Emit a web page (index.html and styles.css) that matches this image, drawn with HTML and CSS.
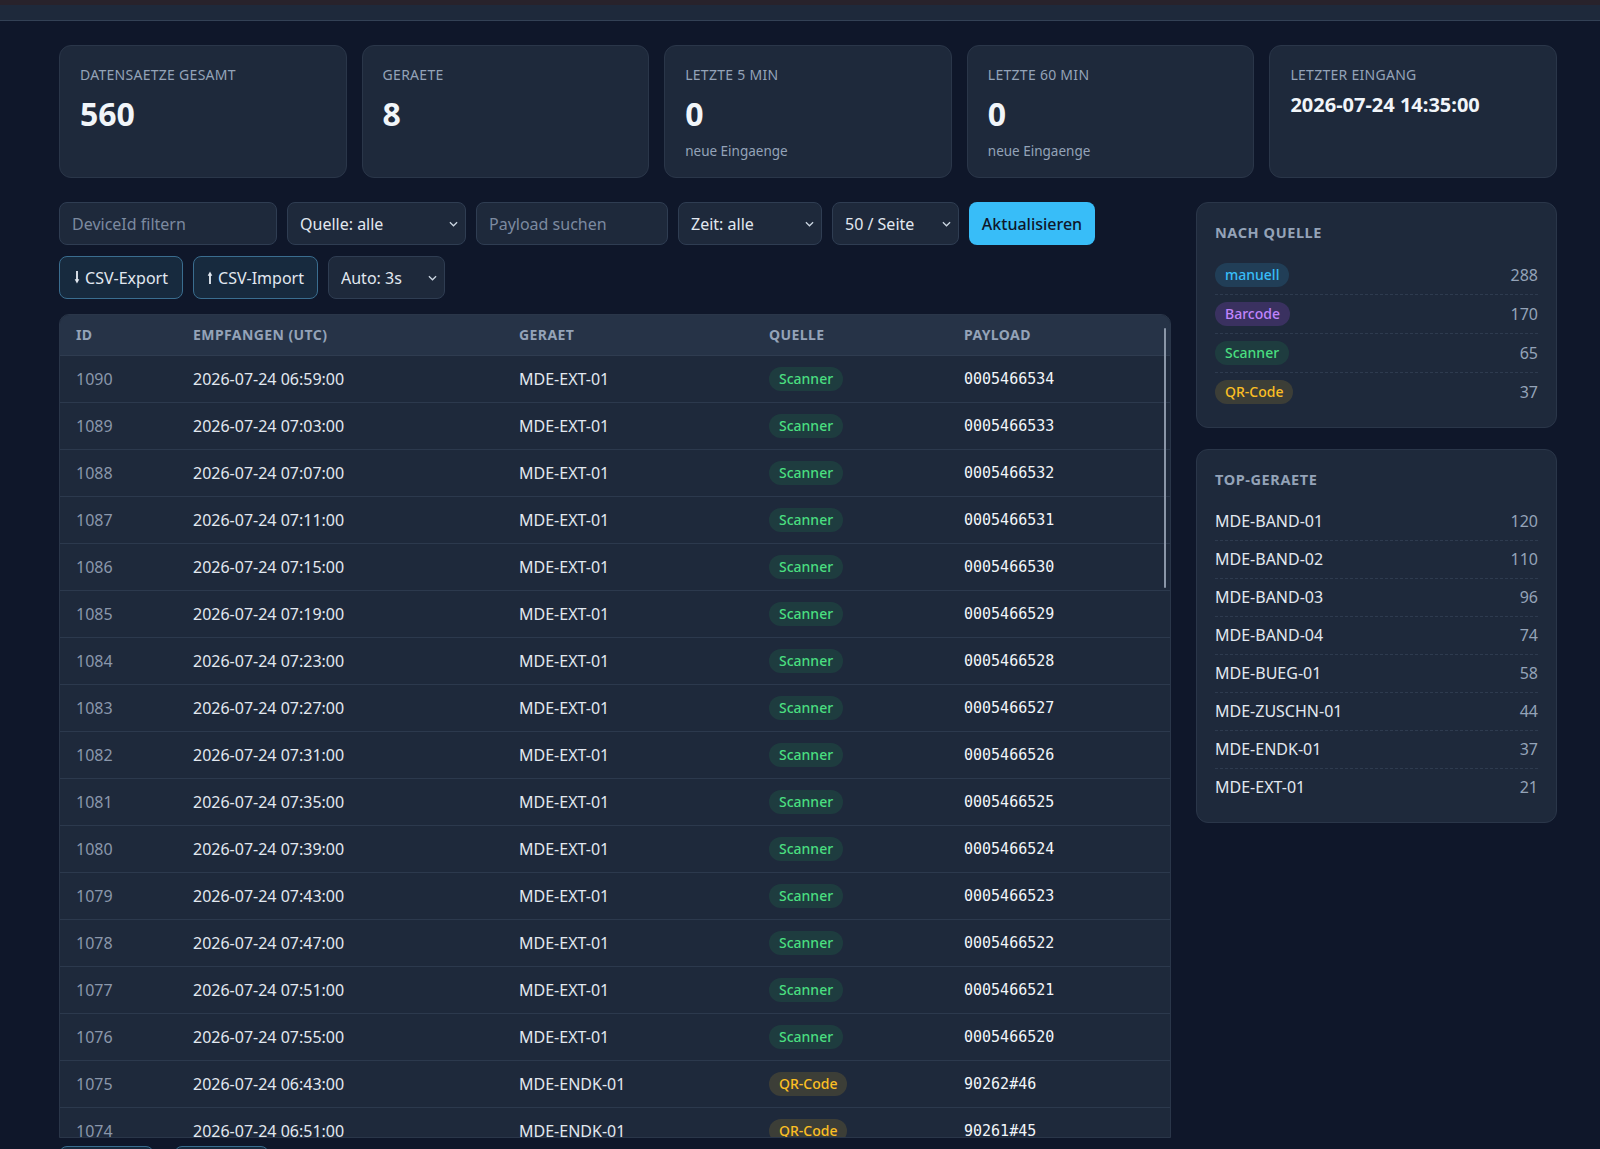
FILE: index.html
```html
<!DOCTYPE html>
<html lang="de">
<head>
    <meta charset="UTF-8">
    <meta name="viewport" content="width=device-width, initial-scale=1.0">
    <title>MDE Eingaenge</title>
    <link rel="stylesheet" href="styles.css">
</head>
<body>
    <div class="topbar"></div>

    <main class="page">
        <!-- Kennzahlen -->
        <section class="stats">
            <div class="stat-card">
                <div class="stat-label">Datensaetze gesamt</div>
                <div class="stat-value">560</div>
            </div>
            <div class="stat-card">
                <div class="stat-label">Geraete</div>
                <div class="stat-value">8</div>
            </div>
            <div class="stat-card">
                <div class="stat-label">Letzte 5 min</div>
                <div class="stat-value">0</div>
                <div class="stat-sub">neue Eingaenge</div>
            </div>
            <div class="stat-card">
                <div class="stat-label">Letzte 60 min</div>
                <div class="stat-value">0</div>
                <div class="stat-sub">neue Eingaenge</div>
            </div>
            <div class="stat-card">
                <div class="stat-label">Letzter Eingang</div>
                <div class="stat-value stat-value-small">2026-07-24 14:35:00</div>
            </div>
        </section>

        <div class="layout">
            <div class="main-col">
                <!-- Filter -->
                <div class="toolbar">
                    <input class="field w-device" type="text" placeholder="DeviceId filtern">
                    <label class="select-wrap w-source">
                        <select class="field">
                            <option>Quelle: alle</option>
                            <option>manuell</option>
                            <option>Barcode</option>
                            <option>Scanner</option>
                            <option>QR-Code</option>
                        </select>
                        <svg class="chevron" viewBox="0 0 10 6"><path d="M1 1l4 4 4-4"/></svg>
                    </label>
                    <input class="field w-payload" type="text" placeholder="Payload suchen">
                    <label class="select-wrap w-time">
                        <select class="field">
                            <option>Zeit: alle</option>
                            <option>5 min</option>
                            <option>60 min</option>
                        </select>
                        <svg class="chevron" viewBox="0 0 10 6"><path d="M1 1l4 4 4-4"/></svg>
                    </label>
                    <label class="select-wrap w-page">
                        <select class="field">
                            <option>50 / Seite</option>
                            <option>100 / Seite</option>
                        </select>
                        <svg class="chevron" viewBox="0 0 10 6"><path d="M1 1l4 4 4-4"/></svg>
                    </label>
                    <button class="btn btn-primary">Aktualisieren</button>
                </div>

                <div class="toolbar">
                    <button class="btn btn-outline w-export">
                        <svg class="arrow" viewBox="0 0 6 14"><path d="M3 0v10"/><path class="head" d="M0.5 9h5L3 13.5z"/></svg>
                        CSV-Export
                    </button>
                    <button class="btn btn-outline w-import">
                        <svg class="arrow" viewBox="0 0 6 14"><path d="M3 4v10"/><path class="head" d="M0.5 5h5L3 0.5z"/></svg>
                        CSV-Import
                    </button>
                    <label class="select-wrap w-auto">
                        <select class="field">
                            <option>Auto: 3s</option>
                            <option>Auto: 10s</option>
                            <option>Auto: aus</option>
                        </select>
                        <svg class="chevron" viewBox="0 0 10 6"><path d="M1 1l4 4 4-4"/></svg>
                    </label>
                </div>

                <!-- Tabelle -->
                <div class="table-wrap">
                    <table class="data-table">
                        <colgroup>
                            <col class="c-id">
                            <col class="c-time">
                            <col class="c-device">
                            <col class="c-source">
                            <col>
                        </colgroup>
                        <thead>
                            <tr>
                                <th>ID</th>
                                <th>Empfangen (UTC)</th>
                                <th>Geraet</th>
                                <th>Quelle</th>
                                <th>Payload</th>
                            </tr>
                        </thead>
                        <tbody id="rows"></tbody>
                    </table>
                </div>

                <div class="pager">
                    <button class="btn btn-outline"></button>
                    <button class="btn btn-outline"></button>
                </div>
            </div>

            <aside class="side-col">
                <div class="panel">
                    <h3 class="panel-title">Nach Quelle</h3>
                    <ul class="panel-list">
                        <li><span class="badge badge-manuell">manuell</span><span class="count">288</span></li>
                        <li><span class="badge badge-barcode">Barcode</span><span class="count">170</span></li>
                        <li><span class="badge badge-scanner">Scanner</span><span class="count">65</span></li>
                        <li><span class="badge badge-qr">QR-Code</span><span class="count">37</span></li>
                    </ul>
                </div>

                <div class="panel">
                    <h3 class="panel-title">Top-Geraete</h3>
                    <ul class="panel-list plain">
                        <li><span>MDE-BAND-01</span><span class="count">120</span></li>
                        <li><span>MDE-BAND-02</span><span class="count">110</span></li>
                        <li><span>MDE-BAND-03</span><span class="count">96</span></li>
                        <li><span>MDE-BAND-04</span><span class="count">74</span></li>
                        <li><span>MDE-BUEG-01</span><span class="count">58</span></li>
                        <li><span>MDE-ZUSCHN-01</span><span class="count">44</span></li>
                        <li><span>MDE-ENDK-01</span><span class="count">37</span></li>
                        <li><span>MDE-EXT-01</span><span class="count">21</span></li>
                    </ul>
                </div>
            </aside>
        </div>
    </main>

    <script>
        const badgeClass = {
            'Scanner': 'badge-scanner',
            'QR-Code': 'badge-qr',
            'Barcode': 'badge-barcode',
            'manuell': 'badge-manuell'
        };

        function fmtTime(minutes) {
            const h = String(Math.floor(minutes / 60)).padStart(2, '0');
            const m = String(minutes % 60).padStart(2, '0');
            return `2026-07-24 ${h}:${m}:00`;
        }

        const rows = [];

        // Scanner-Eingaenge vom Extruder
        for (let i = 0; i < 15; i++) {
            rows.push({
                id: 1090 - i,
                time: fmtTime(6 * 60 + 59 + i * 4),
                device: 'MDE-EXT-01',
                source: 'Scanner',
                payload: '000546' + (6534 - i)
            });
        }

        // QR-Codes aus der Endkontrolle
        for (let j = 0; j < 2; j++) {
            rows.push({
                id: 1075 - j,
                time: fmtTime(6 * 60 + 43 + j * 8),
                device: 'MDE-ENDK-01',
                source: 'QR-Code',
                payload: (90262 - j) + '#' + (46 - j)
            });
        }

        document.getElementById('rows').innerHTML = rows.map(r => `
            <tr>
                <td class="col-id">${r.id}</td>
                <td>${r.time}</td>
                <td>${r.device}</td>
                <td><span class="badge ${badgeClass[r.source]}">${r.source}</span></td>
                <td class="col-payload">${r.payload}</td>
            </tr>`).join('');
    </script>
</body>
</html>
```

FILE: styles.css
```css
* {
    margin: 0;
    padding: 0;
    box-sizing: border-box;
}

body {
    font-family: 'Noto Sans', 'Open Sans', sans-serif;
    background: #0f172a;
    color: #e2e8f0;
    overflow: hidden;
    height: 100vh;
}

.topbar {
    height: 21px;
    background: #1e293b;
    border-top: 5px solid #28222b;
    border-bottom: 1px solid #334155;
}

.page {
    padding: 24px 43px 0 59px;
}

/* Kennzahlen */
.stats {
    display: grid;
    grid-template-columns: repeat(5, 1fr);
    gap: 15px;
}

.stat-card {
    background: #1e293b;
    border: 1px solid #2a3649;
    border-radius: 12px;
    padding: 20px 20px 17px;
    height: 133px;
}

.stat-label {
    font-size: 14px;
    line-height: 18px;
    color: #94a3b8;
    text-transform: uppercase;
    letter-spacing: 0.02em;
}

.stat-value {
    margin-top: 8px;
    font-size: 32px;
    line-height: 44px;
    font-weight: 700;
    color: #f1f5f9;
}

.stat-value-small {
    font-size: 20px;
    line-height: 26px;
}

.stat-sub {
    margin-top: 6px;
    font-size: 13.5px;
    line-height: 18px;
    color: #94a3b8;
}

/* Hauptbereich */
.layout {
    display: grid;
    grid-template-columns: 1fr 361px;
    gap: 25px;
    margin-top: 24px;
    align-items: start;
}

.toolbar {
    display: flex;
    gap: 10px;
    margin-bottom: 11px;
}

.field {
    height: 43px;
    background: #1e293b;
    border: 1px solid #2f3d52;
    border-radius: 8px;
    color: #e2e8f0;
    font-family: inherit;
    font-size: 16px;
    padding: 0 12px;
    outline: none;
}

.field::placeholder {
    color: #7c8aa0;
}

select.field {
    appearance: none;
    width: 100%;
    cursor: pointer;
}

.select-wrap {
    position: relative;
    display: block;
}

.chevron {
    position: absolute;
    right: 8px;
    top: 19px;
    width: 9px;
    height: 6px;
    fill: none;
    stroke: #cbd5e1;
    stroke-width: 1.4;
    pointer-events: none;
}

.w-device { width: 218px; }
.w-source { width: 179px; }
.w-payload { width: 192px; }
.w-time { width: 144px; }
.w-page { width: 127px; }
.w-export { width: 124px; }
.w-import { width: 125px; }
.w-auto { width: 117px; }

.btn {
    height: 43px;
    border-radius: 8px;
    font-family: inherit;
    font-size: 16px;
    padding: 0 12px;
    cursor: pointer;
    display: inline-flex;
    align-items: center;
    justify-content: center;
    gap: 5px;
}

.btn-primary {
    width: 126px;
    background: #38bdf8;
    border: none;
    color: #0f172a;
    font-weight: 500;
}

.btn-outline {
    background: #172a3e;
    border: 1px solid #3a6d8f;
    color: #e2e8f0;
}

.arrow {
    width: 6px;
    height: 13px;
    stroke: #e2e8f0;
    stroke-width: 2;
    fill: none;
}

.arrow .head {
    fill: #e2e8f0;
    stroke: none;
}

/* Tabelle */
.table-wrap {
    position: relative;
    margin-top: 15px;
    height: 824px;
    overflow: hidden;
    background: #1e293b;
    border: 1px solid #2a3649;
    border-radius: 10px 10px 0 0;
}

/* Scrollbalken (Overlay) */
.table-wrap::after {
    content: '';
    position: absolute;
    right: 4px;
    top: 13px;
    width: 2px;
    height: 260px;
    border-radius: 1px;
    background: #8a96a8;
}

.data-table {
    width: 100%;
    border-collapse: collapse;
    table-layout: fixed;
}

.c-id { width: 117px; }
.c-time { width: 326px; }
.c-device { width: 250px; }
.c-source { width: 195px; }

.data-table th {
    background: #263347;
    text-align: left;
    padding: 10px 16px;
    font-size: 14px;
    line-height: 20px;
    font-weight: 700;
    color: #94a3b8;
    text-transform: uppercase;
    letter-spacing: 0.03em;
    border-bottom: 1px solid #2f3c50;
}

.data-table td {
    padding: 11px 16px;
    font-size: 16px;
    line-height: 24px;
    height: 47px;
    border-bottom: 1px solid #2c394d;
    white-space: nowrap;
}

.data-table td.col-id {
    color: #8a97ab;
}

.data-table td.col-payload {
    font-family: 'DejaVu Sans Mono', 'Liberation Mono', monospace;
    font-size: 15px;
    color: #f1f5f9;
}

.badge {
    display: inline-block;
    padding: 0 10px;
    border-radius: 999px;
    font-size: 14px;
    line-height: 24px;
    font-weight: 500;
    vertical-align: top;
}

.badge-scanner {
    color: #4ade80;
    background: rgba(34, 197, 94, 0.13);
}

.badge-qr {
    color: #fbbf24;
    background: rgba(251, 191, 36, 0.14);
}

.badge-barcode {
    color: #c084fc;
    background: rgba(168, 85, 247, 0.2);
}

.badge-manuell {
    color: #38bdf8;
    background: rgba(56, 189, 248, 0.15);
}

.pager {
    display: flex;
    gap: 20px;
    margin-top: 8px;
}

.pager .btn {
    width: 95px;
}

/* Seitenleiste */
.side-col {
    display: flex;
    flex-direction: column;
    gap: 21px;
}

.panel {
    background: #1e293b;
    border: 1px solid #2a3649;
    border-radius: 12px;
    padding: 19px 18px 16px;
}

.panel-title {
    font-size: 14.5px;
    line-height: 20px;
    font-weight: 700;
    color: #94a3b8;
    text-transform: uppercase;
    letter-spacing: 0.04em;
    margin-bottom: 14px;
}

.panel-list {
    list-style: none;
}

.panel-list li {
    display: flex;
    justify-content: space-between;
    align-items: center;
    padding: 7px 0;
    border-bottom: 1px dashed #2e3b4f;
    font-size: 16px;
    line-height: 24px;
}

.panel-list.plain li {
    padding: 8px 0;
    line-height: 21px;
}

.panel-list li:last-child {
    border-bottom: none;
}

.count {
    color: #94a3b8;
}
```
